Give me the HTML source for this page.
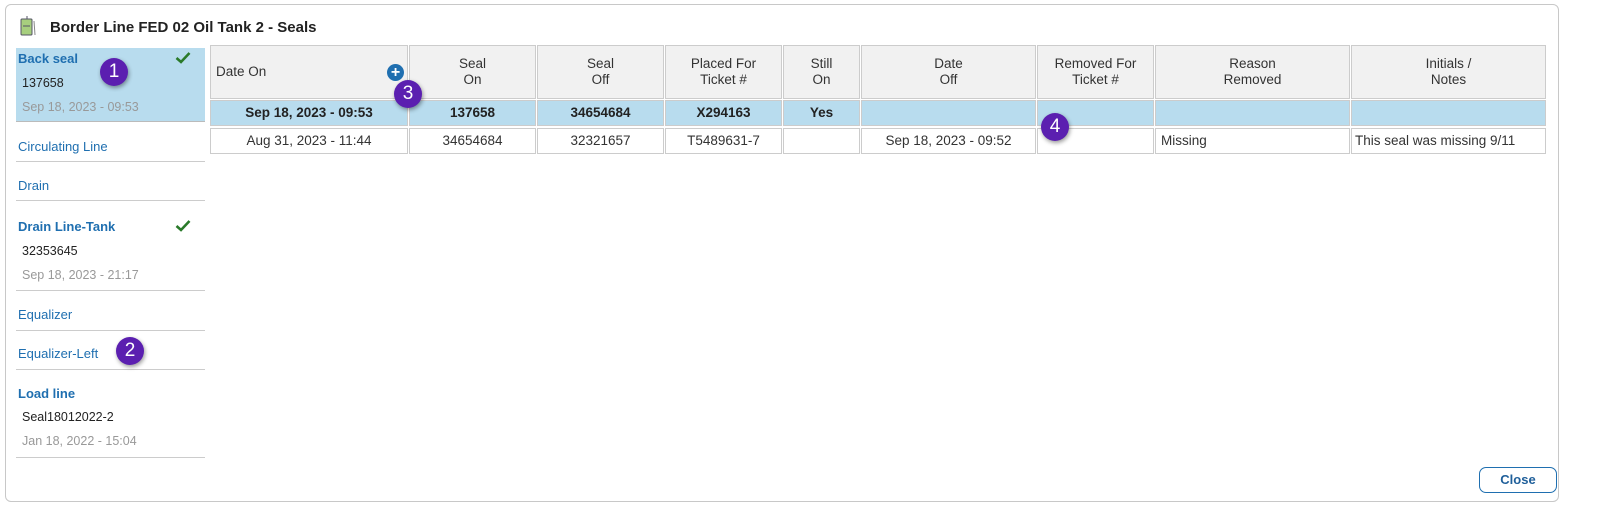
<!DOCTYPE html><html><head><style>
body{margin:0;width:1600px;height:514px;background:#fff;font-family:"Liberation Sans",sans-serif;position:relative;overflow:hidden}
.a{position:absolute}
.dlg{left:5px;top:4px;width:1552px;height:496px;border:1px solid #c8c8c8;border-radius:6px}
.title{left:50px;top:19px;font-size:15px;font-weight:bold;color:#222}
.it{position:absolute;left:16px;width:189px;border-bottom:1px solid #ccc;font-size:13px}
.lk{color:#1f6fb0;left:2px;position:absolute}
.b{font-weight:bold}
.v{position:absolute;left:6px;color:#222;font-size:12.5px}
.d{position:absolute;left:6px;color:#999;font-size:12.5px}
.ck{position:absolute;right:14px}
.c{position:absolute;box-sizing:border-box;border:1px solid #ccc;font-size:13.5px;color:#333;text-align:center;display:flex;align-items:center;justify-content:center;line-height:16px}
.h{background:#f1f1f1;top:45px;height:54px}
.r1{background:#b8dcee;top:100px;height:26px;font-weight:bold;color:#222}
.r2{top:128px;height:26px}
.badge{position:absolute;width:28px;height:28px;border-radius:50%;background:#5b1fb0;color:#fff;font-size:19px;text-align:center;line-height:28px;box-shadow:1px 2px 4px rgba(0,0,0,.4)}
</style></head><body>
<div class="a dlg"></div>
<svg class="a" style="left:19px;top:15px" width="18" height="22"><rect x="2" y="4" width="11" height="16" rx="1" fill="#a7cf7e" stroke="#556" stroke-width="1"/><line x1="4" y1="11" x2="11" y2="11" stroke="#556"/><line x1="8" y1="1" x2="8" y2="4" stroke="#556"/><line x1="15" y1="6" x2="16" y2="20" stroke="#888"/></svg>
<div class="a title">Border Line FED 02 Oil Tank 2 - Seals</div>

<div class="it" style="top:48px;height:73px;background:#b8dcee;border-color:#bbb">
<span class="lk b" style="top:3px">Back seal</span><svg class="ck" style="top:3px" width="16" height="13"><path d="M1.5 7 L6 11 L14.5 2" fill="none" stroke="#2a7a2a" stroke-width="2.6"/></svg>
<span class="v" style="top:28px">137658</span><span class="d" style="top:52px">Sep 18, 2023 - 09:53</span></div>
<div class="it" style="top:122px;height:39px"><span class="lk" style="top:17px">Circulating Line</span></div>
<div class="it" style="top:162px;height:38px"><span class="lk" style="top:16px">Drain</span></div>
<div class="it" style="top:201px;height:89px"><span class="lk b" style="top:18px">Drain Line-Tank</span><svg class="ck" style="top:18px" width="16" height="13"><path d="M1.5 7 L6 11 L14.5 2" fill="none" stroke="#2a7a2a" stroke-width="2.6"/></svg>
<span class="v" style="top:43px">32353645</span><span class="d" style="top:67px">Sep 18, 2023 - 21:17</span></div>
<div class="it" style="top:291px;height:39px"><span class="lk" style="top:16px">Equalizer</span></div>
<div class="it" style="top:331px;height:38px"><span class="lk" style="top:15px">Equalizer-Left</span></div>
<div class="it" style="top:370px;height:87px"><span class="lk b" style="top:16px">Load line</span>
<span class="v" style="top:40px">Seal18012022-2</span><span class="d" style="top:64px">Jan 18, 2022 - 15:04</span></div>

<div class="c h" style="left:210px;width:198px;justify-content:flex-start;padding-left:5px">Date On</div>
<div class="a" style="left:387px;top:64px;width:17px;height:17px;border-radius:50%;background:#1f6fb0;color:#fff;font-weight:bold;font-size:16px;line-height:17px;text-align:center">+</div>
<div class="c h" style="left:409px;width:127px">Seal<br>On</div>
<div class="c h" style="left:537px;width:127px">Seal<br>Off</div>
<div class="c h" style="left:665px;width:117px">Placed For<br>Ticket #</div>
<div class="c h" style="left:783px;width:77px">Still<br>On</div>
<div class="c h" style="left:861px;width:175px">Date<br>Off</div>
<div class="c h" style="left:1037px;width:117px">Removed For<br>Ticket #</div>
<div class="c h" style="left:1155px;width:195px">Reason<br>Removed</div>
<div class="c h" style="left:1351px;width:195px">Initials /<br>Notes</div>

<div class="c r1" style="left:210px;width:198px">Sep 18, 2023 - 09:53</div>
<div class="c r1" style="left:409px;width:127px">137658</div>
<div class="c r1" style="left:537px;width:127px">34654684</div>
<div class="c r1" style="left:665px;width:117px">X294163</div>
<div class="c r1" style="left:783px;width:77px">Yes</div>
<div class="c r1" style="left:861px;width:175px"></div>
<div class="c r1" style="left:1037px;width:117px"></div>
<div class="c r1" style="left:1155px;width:195px"></div>
<div class="c r1" style="left:1351px;width:195px"></div>

<div class="c r2" style="left:210px;width:198px">Aug 31, 2023 - 11:44</div>
<div class="c r2" style="left:409px;width:127px">34654684</div>
<div class="c r2" style="left:537px;width:127px">32321657</div>
<div class="c r2" style="left:665px;width:117px">T5489631-7</div>
<div class="c r2" style="left:783px;width:77px"></div>
<div class="c r2" style="left:861px;width:175px">Sep 18, 2023 - 09:52</div>
<div class="c r2" style="left:1037px;width:117px"></div>
<div class="c r2" style="left:1155px;width:195px;justify-content:flex-start;padding-left:5px">Missing</div>
<div class="c r2" style="left:1351px;width:195px;justify-content:flex-start;padding-left:3px">This seal was missing 9/11</div>

<div class="badge" style="left:100px;top:58px">1</div>
<div class="badge" style="left:116px;top:337px">2</div>
<div class="badge" style="left:394px;top:80px">3</div>
<div class="badge" style="left:1041px;top:113px">4</div>

<div class="a" style="left:1479px;top:467px;width:78px;height:26px;box-sizing:border-box;border:1px solid #1f6fb0;border-radius:7px;color:#1f5f9a;font-weight:bold;font-size:13px;text-align:center;line-height:24px">Close</div>
</body></html>
